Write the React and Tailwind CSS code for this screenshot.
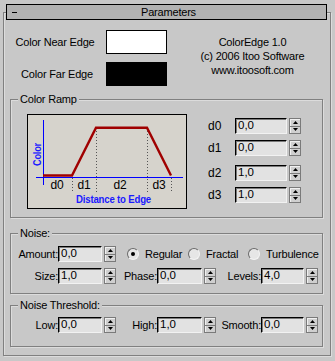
import React from "react"

function Field({ w, value }) {
  return (
    <div
      className={`${w} h-[16px] bg-[#e2e2e2] border border-t-black border-l-black border-b-[#f2f2f2] border-r-[#f2f2f2] shadow-[inset_1px_1px_0_#7a7a7a] pl-[2px] flex items-center text-[11.5px] tracking-normal`}
    >
      {value}
    </div>
  )
}

function Spin() {
  return (
    <div className="ml-[2px] w-[12px] h-[16px] flex flex-col border border-[#7a7a7a] bg-[#cfcfcf] shadow-[inset_1px_1px_0_#f0f0f0]">
      <div className="flex-1 flex items-center justify-center border-b border-[#7a7a7a]">
        <svg width="5" height="3" viewBox="0 0 5 3">
          <path d="M2.5 0L5 3H0z" fill="#000" />
        </svg>
      </div>
      <div className="flex-1 flex items-center justify-center">
        <svg width="5" height="3" viewBox="0 0 5 3">
          <path d="M0 0H5L2.5 3z" fill="#000" />
        </svg>
      </div>
    </div>
  )
}

function Radio({ on }) {
  return (
    <div className="w-[12px] h-[12px] rounded-full bg-[#e6e6e6] border border-t-[#6a6a6a] border-l-[#6a6a6a] border-b-[#f4f4f4] border-r-[#f4f4f4] flex items-center justify-center">
      {on && <div className="w-[4px] h-[4px] rounded-full bg-black" />}
    </div>
  )
}

function Group({ title, className, children }) {
  return (
    <fieldset
      className={`ml-[6px] w-[313px] border border-[#808080] shadow-[1px_1px_0_#dcdcdc,inset_1px_1px_0_#dcdcdc] ${className}`}
    >
      <legend className="ml-[7px] px-[2px] leading-[13px] bg-[#c8c8c8]">{title}</legend>
      {children}
    </fieldset>
  )
}

function Ramp() {
  return (
    <div className="w-[160px] h-[95px] border border-black bg-[#d6d3cc]">
      <svg width="158" height="93" viewBox="0 0 158 93" style={{ fontFamily: "'Liberation Sans', Arial, sans-serif" }}>
        <line x1="15.5" y1="5" x2="15.5" y2="70" stroke="#0000ff" strokeWidth="1" />
        <line x1="8" y1="62.5" x2="155" y2="62.5" stroke="#0000ff" strokeWidth="1" />
        <g stroke="#555" strokeWidth="1" strokeDasharray="1 2">
          <line x1="44.5" y1="63" x2="44.5" y2="78" />
          <line x1="68.5" y1="13" x2="68.5" y2="78" />
          <line x1="119.5" y1="13" x2="119.5" y2="78" />
          <line x1="143.5" y1="63" x2="143.5" y2="78" />
        </g>
        <polyline
          points="15,60.5 44,60.5 68,12.8 119,12.8 143,60.5"
          fill="none"
          stroke="#a00000"
          strokeWidth="2.4"
        />
        <g fontSize="12" fill="#000" textAnchor="middle">
          <text x="29" y="73.5">d0</text>
          <text x="56" y="73.5">d1</text>
          <text x="92" y="73.5">d2</text>
          <text x="131" y="73.5">d3</text>
        </g>
        <text x="85.5" y="88" fontSize="10" fontWeight="bold" fill="#1a1aff" textAnchor="middle" textLength="75" lengthAdjust="spacingAndGlyphs">
          Distance to Edge
        </text>
        <text
          transform="translate(13,39.5) rotate(-90)"
          fontSize="10"
          fontWeight="bold"
          fill="#1a1aff"
          textAnchor="middle"
          textLength="23"
          lengthAdjust="spacingAndGlyphs"
        >
          Color
        </text>
      </svg>
    </div>
  )
}

function DRow({ label, value, className }) {
  return (
    <div className={`flex items-center ${className}`}>
      <span className="w-[27px] text-[12px] tracking-normal">{label}</span>
      <Field w="w-[52px]" value={value} />
      <Spin />
    </div>
  )
}

export default function App() {
  return (
    <div className="w-[335px] h-[361px] bg-[#c8c8c8] pt-[12px] pl-[3px] overflow-hidden font-['Liberation_Sans',Arial,sans-serif] text-[11px] tracking-[-0.2px] text-black leading-none">
      <div className="w-[328px] h-[344px] border border-[#808080] shadow-[1px_1px_0_#dcdcdc,inset_1px_1px_0_#dcdcdc]">
        {/* rollout title */}
        <div className="-mt-[9px] ml-[2px] w-[321px] h-[16px] border border-black bg-[#b2b2b2] flex items-center">
          <div className="ml-[5px] w-[5px] h-[1px] bg-black" />
          <span className="flex-1 text-center pr-[6px]">Parameters</span>
        </div>

        {/* colours + about */}
        <div className="flex mt-[10px]">
          <div className="flex flex-col gap-[8px]">
            <div className="flex items-center">
              <span className="w-[102px] text-center">Color Near Edge</span>
              <div className="w-[61px] h-[24px] bg-white border border-black" />
            </div>
            <div className="flex items-center">
              <span className="w-[102px] text-center pl-[4px]">Color Far Edge</span>
              <div className="w-[61px] h-[24px] bg-black" />
            </div>
          </div>
          <div className="flex-1 pl-[8px] mt-[5px] text-center leading-[14px]">
            <div>ColorEdge 1.0</div>
            <div>(c) 2006 Itoo Software</div>
            <div>www.itoosoft.com</div>
          </div>
        </div>

        <Group title="Color Ramp" className="mt-[7px] h-[125px]">
          <div className="flex mt-[8px] ml-[16px]">
            <Ramp />
            <div className="ml-[21px] pt-[4px]">
              <DRow label="d0" value="0,0" />
              <DRow label="d1" value="0,0" className="mt-[6px]" />
              <DRow label="d2" value="1,0" className="mt-[9px]" />
              <DRow label="d3" value="1,0" className="mt-[6px]" />
            </div>
          </div>
        </Group>

        <Group title="Noise:" className="mt-[9px] h-[67px]">
          <div className="flex items-center mt-[6px]">
            <span className="w-[47px] text-right">Amount:</span>
            <Field w="w-[44px]" value="0,0" />
            <Spin />
            <div className="ml-[11px] w-[61px] flex items-center">
              <Radio on />
              <span className="ml-[6px]">Regular</span>
            </div>
            <div className="w-[60px] flex items-center">
              <Radio />
              <span className="ml-[6px]">Fractal</span>
            </div>
            <div className="flex items-center">
              <Radio />
              <span className="ml-[6px]">Turbulence</span>
            </div>
          </div>
          <div className="flex items-center mt-[6px]">
            <span className="w-[47px] text-right">Size:</span>
            <Field w="w-[44px]" value="1,0" />
            <Spin />
            <span className="w-[41px] text-right">Phase:</span>
            <Field w="w-[45px]" value="0,0" />
            <Spin />
            <span className="w-[45px] text-right">Levels:</span>
            <Field w="w-[43px]" value="4,0" />
            <Spin />
          </div>
        </Group>

        <Group title="Noise Threshold:" className="mt-[5px] h-[48px]">
          <div className="flex items-center mt-[5px]">
            <span className="w-[47px] text-right">Low:</span>
            <Field w="w-[44px]" value="0,0" />
            <Spin />
            <span className="w-[41px] text-right">High:</span>
            <Field w="w-[45px]" value="1,0" />
            <Spin />
            <span className="w-[45px] text-right">Smooth:</span>
            <Field w="w-[43px]" value="0,0" />
            <Spin />
          </div>
        </Group>
      </div>
    </div>
  )
}
